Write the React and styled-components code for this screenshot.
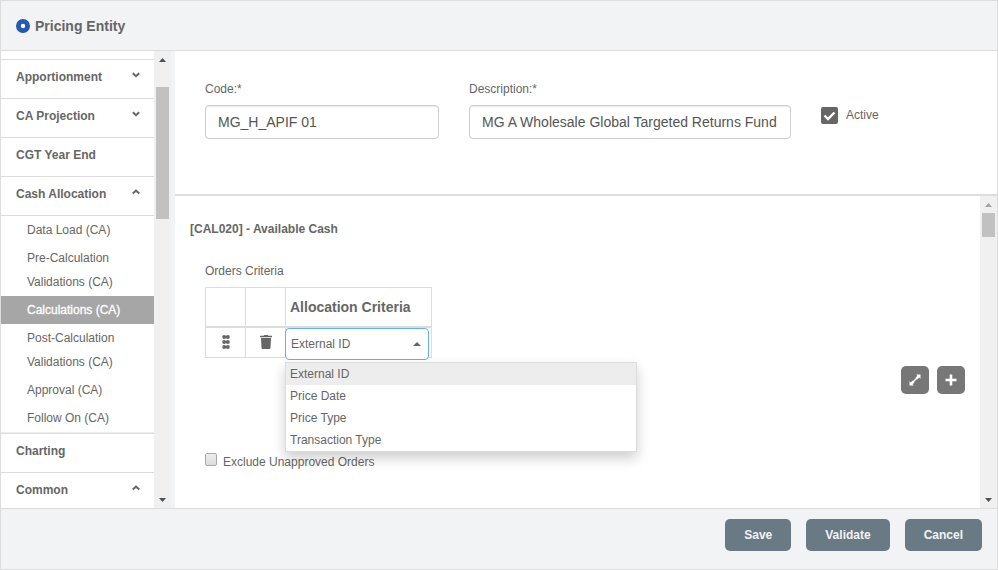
import React, { useState } from "react";
import styled, { createGlobalStyle } from "styled-components";

const GlobalStyle = createGlobalStyle`
  *, *::before, *::after { box-sizing: border-box; }
  html, body { margin: 0; padding: 0; }
  body, button, input, select {
    font-family: "Liberation Sans", Arial, Helvetica, sans-serif;
    font-size: 12px;
    color: #666;
  }
`;

const line = "#ddd";
const chrome = "#f2f3f5";

const Shell = styled.div`
  display: flex;
  flex-direction: column;
  height: 100vh;
  border: 1px solid ${line};
  background: ${chrome};
`;

const Header = styled.header`
  flex: none;
  display: flex;
  align-items: center;
  gap: 5px;
  height: 50px;
  padding: 0 15px;
  border-bottom: 1px solid ${line};
`;

const Title = styled.h1`
  margin: 0;
  font-size: 14px;
  line-height: 20px;
`;

const Body = styled.div`
  flex: 1;
  min-height: 0;
  display: flex;
`;

const Sidebar = styled.div`
  flex: none;
  display: flex;
  width: 170px;
  margin-right: 4px;
`;

const Nav = styled.nav`
  flex: 1;
  min-width: 0;
  overflow: hidden;
  padding-top: 8px;
  background: #fff;
`;

const NavGroup = styled.button`
  display: flex;
  justify-content: space-between;
  align-items: flex-start;
  width: 100%;
  height: 39px;
  padding: 9px 13px 0 15px;
  border: 0;
  border-top: 1px solid ${line};
  background: #fff;
  font-weight: bold;
  line-height: 16px;
  text-align: left;
  cursor: pointer;

  svg { margin-top: 2px; }
`;

const SubList = styled.ul`
  margin: 0;
  padding: 0;
  list-style: none;
  border-top: 1px solid ${line};
  border-bottom: 1px solid #eee;
`;

const SubLink = styled.a`
  display: block;
  padding: 2px 30px 2px 26px;
  line-height: 24px;
  text-decoration: none;
  color: ${(p) => (p.$active ? "#fff" : "#666")};
  background: ${(p) => (p.$active ? "#a6a6a6" : "transparent")};
  -webkit-text-stroke: ${(p) => (p.$active ? "0.3px #fff" : "0")};
`;

const Track = styled.div`
  flex: none;
  display: flex;
  flex-direction: column;
  align-items: center;
  width: 17px;
  background: #f0f0f0;
`;

const Arrow = styled.span`
  flex: none;
  display: flex;
  align-items: center;
  justify-content: center;
  width: 17px;
  height: 17px;
  color: ${(p) => (p.$muted ? "#a3a3a3" : "#505050")};
`;

const ThumbArea = styled.div`
  flex: 1;
  min-height: 0;
  padding-top: ${(p) => p.$top}px;
`;

const Thumb = styled.div`
  width: 13px;
  height: ${(p) => p.$size}px;
  background: #c1c1c1;
`;

const Main = styled.main`
  flex: 1;
  min-width: 0;
  display: flex;
  flex-direction: column;
`;

const FormGrid = styled.section`
  flex: none;
  display: grid;
  grid-template-columns: 3fr 4fr 2fr;
  padding: 30px 15px 55px;
  background: #fff;
  border-bottom: 2px solid ${line};
`;

const Field = styled.div`
  display: flex;
  flex-direction: column;
  gap: 8px;
  min-width: 0;
  padding: 0 15px;
`;

const Label = styled.label`
  line-height: 16px;
`;

const TextInput = styled.input`
  width: 100%;
  height: 34px;
  padding: 0 12px;
  border: 1px solid #ccc;
  border-radius: 4px;
  box-shadow: inset 0 1px 1px rgba(0, 0, 0, 0.075);
  background: #fff;
  color: #555;
  font-size: 14px;
`;

const ActiveField = styled.label`
  display: flex;
  align-items: flex-start;
  gap: 8px;
  padding: 26px 15px 0;
  line-height: 16px;
`;

const TickBox = styled.span`
  display: grid;

  input, svg { grid-area: 1 / 1; }
  svg { pointer-events: none; visibility: hidden; }
  input:checked + svg { visibility: visible; }
`;

const TickInput = styled.input`
  appearance: none;
  width: 17px;
  height: 17px;
  margin: 0;
  border: 2px solid #666;
  border-radius: 2px;

  &:checked { background: #666; }
`;

const Pane = styled.div`
  flex: 1;
  min-height: 0;
  display: flex;
  background: #fff;
`;

const PaneContent = styled.section`
  flex: 1;
  min-width: 0;
  overflow: hidden;
  padding: 25px 15px 0;
`;

const SectionTitle = styled.h2`
  margin: 0 0 26px;
  font-size: 12px;
  line-height: 16px;
`;

const Criteria = styled.div`
  padding-left: 15px;
`;

const CriteriaTable = styled.table`
  margin-top: 8px;
  border-collapse: collapse;
  table-layout: fixed;
  width: 227px;

  caption { padding-bottom: 8px; line-height: 16px; text-align: left; }
`;

const HeadCell = styled.th`
  width: ${(p) => (p.$narrow ? "40px" : "auto")};
  height: 39px;
  padding: 0 4px;
  border: 1px solid ${line};
  border-bottom-width: 2px;
  font-size: 14px;
  text-align: left;
`;

const Cell = styled.td`
  height: 30px;
  padding: 0;
  border: 1px solid ${line};
  text-align: center;
  vertical-align: middle;
`;

const CellButton = styled.button`
  display: inline-flex;
  padding: 0;
  border: 0;
  background: none;
  vertical-align: middle;
  cursor: pointer;
`;

const Combo = styled.div`
  position: relative;
  display: grid;
  align-items: center;
  width: 144px;
  height: 32px;
  margin: 0 0 -3px -1px;
  text-align: left;

  > select, > svg { grid-area: 1 / 1; }
  > svg { justify-self: end; margin-right: 8px; pointer-events: none; }
`;

const Select = styled.select`
  appearance: none;
  width: 100%;
  height: 32px;
  padding: 0 24px 0 5px;
  border: 1px solid #66afe9;
  border-radius: 4px;
  background: #fff;
  outline: none;
`;

const Menu = styled.ul`
  position: absolute;
  z-index: 2;
  top: 34px;
  left: 0;
  width: 352px;
  margin: 0;
  padding: 0;
  list-style: none;
  border: 1px solid ${line};
  background: #fff;
  box-shadow: 0 6px 12px rgba(0, 0, 0, 0.2);
`;

const Option = styled.li`
  padding: 0 4px;
  line-height: 22px;
  background: ${(p) => (p.$selected ? "#ededed" : "transparent")};
  cursor: pointer;
`;

const Actions = styled.div`
  display: flex;
  justify-content: flex-end;
  gap: 8px;
  margin: 8px 0 59px;
`;

const IconButton = styled.button`
  display: flex;
  align-items: center;
  justify-content: center;
  width: 28px;
  height: 28px;
  padding: 0;
  border: 0;
  border-radius: 5px;
  background: #777;
  color: #fff;
`;

const CheckRow = styled.label`
  display: flex;
  align-items: flex-start;
  gap: 6px;
  line-height: 18px;
`;

const PlainCheck = styled.input`
  appearance: none;
  width: 12px;
  height: 13px;
  margin: 0;
  border: 1px solid #a8a8a8;
  border-radius: 2px;
  background: linear-gradient(#eee, #dcdcdc);

  &:checked { background: #666; }
`;

const Footer = styled.footer`
  flex: none;
  display: flex;
  justify-content: flex-end;
  gap: 15px;
  padding: 10px 15px 18px;
  border-top: 1px solid ${line};
`;

const FooterButton = styled.button`
  height: 32px;
  padding: 0 19px;
  border: 0;
  border-radius: 5px;
  background: #6a7a84;
  color: ${chrome};
  font-weight: bold;
  cursor: pointer;
`;

function Chevron({ up }) {
  return (
    <svg width="10" height="8" viewBox="0 0 10 8" aria-hidden="true">
      <path d={up ? "M1.8 5.6 5 2.6 8.2 5.6" : "M1.8 2.2 5 5.2 8.2 2.2"} fill="none" stroke="#666" strokeWidth="2" />
    </svg>
  );
}

function Scrollbar({ top, size, atTop }) {
  return (
    <Track aria-hidden="true">
      <Arrow $muted={atTop}>
        <svg width="7" height="4" viewBox="0 0 7 4"><path d="M0 4 3.5 0 7 4Z" fill="currentColor" /></svg>
      </Arrow>
      <ThumbArea $top={top}><Thumb $size={size} /></ThumbArea>
      <Arrow>
        <svg width="7" height="4" viewBox="0 0 7 4"><path d="M0 0H7L3.5 4Z" fill="currentColor" /></svg>
      </Arrow>
    </Track>
  );
}

const groups = [
  { name: "Apportionment", state: "closed" },
  { name: "CA Projection", state: "closed" },
  { name: "CGT Year End" },
  {
    name: "Cash Allocation",
    state: "open",
    items: [
      "Data Load (CA)",
      "Pre-Calculation Validations (CA)",
      "Calculations (CA)",
      "Post-Calculation Validations (CA)",
      "Approval (CA)",
      "Follow On (CA)",
    ],
  },
  { name: "Charting" },
  { name: "Common", state: "open" },
];

const criteria = ["External ID", "Price Date", "Price Type", "Transaction Type"];

export default function App() {
  const [criterion, setCriterion] = useState("External ID");

  return (
    <Shell>
      <GlobalStyle />
      <Header>
        <svg width="14" height="14" viewBox="0 0 14 14" aria-hidden="true">
          <circle cx="7" cy="7" r="4.6" fill="#fff" stroke="#2458b3" strokeWidth="4.8" />
        </svg>
        <Title>Pricing Entity</Title>
      </Header>

      <Body>
        <Sidebar>
          <Nav aria-label="Sections">
            {groups.map((g) => (
              <React.Fragment key={g.name}>
                <NavGroup type="button">
                  {g.name}
                  {g.state && <Chevron up={g.state === "open"} />}
                </NavGroup>
                {g.items && (
                  <SubList>
                    {g.items.map((item) => (
                      <li key={item}>
                        <SubLink href="#" $active={item === "Calculations (CA)"}>{item}</SubLink>
                      </li>
                    ))}
                  </SubList>
                )}
              </React.Fragment>
            ))}
          </Nav>
          <Scrollbar top={19} size={132} />
        </Sidebar>

        <Main>
          <FormGrid>
            <Field>
              <Label htmlFor="code">Code:*</Label>
              <TextInput id="code" defaultValue="MG_H_APIF 01" />
            </Field>
            <Field>
              <Label htmlFor="description">Description:*</Label>
              <TextInput id="description" defaultValue="MG A Wholesale Global Targeted Returns Fund" />
            </Field>
            <ActiveField>
              <TickBox>
                <TickInput type="checkbox" defaultChecked />
                <svg width="17" height="17" viewBox="0 0 17 17" aria-hidden="true">
                  <path d="M3.5 8.5 7 12 13.5 5.5" fill="none" stroke="#fff" strokeWidth="2.4" />
                </svg>
              </TickBox>
              Active
            </ActiveField>
          </FormGrid>

          <Pane>
            <PaneContent>
              <SectionTitle>[CAL020] - Available Cash</SectionTitle>
              <Criteria>
                <CriteriaTable>
                  <caption>Orders Criteria</caption>
                  <thead>
                    <tr>
                      <HeadCell $narrow />
                      <HeadCell $narrow />
                      <HeadCell>Allocation Criteria</HeadCell>
                    </tr>
                  </thead>
                  <tbody>
                    <tr>
                      <Cell>
                        <CellButton type="button" aria-label="Reorder">
                          <svg width="8" height="14" viewBox="0 0 8 14" fill="#666">
                            {[2, 7, 12].map((y) => (
                              <React.Fragment key={y}>
                                <circle cx="2.2" cy={y} r="2" />
                                <circle cx="5.8" cy={y} r="2" />
                              </React.Fragment>
                            ))}
                          </svg>
                        </CellButton>
                      </Cell>
                      <Cell>
                        <CellButton type="button" aria-label="Delete">
                          <svg width="12" height="14" viewBox="0 0 12 14" fill="#666">
                            <path d="M0 .8H3.5L4.3 0H7.7L8.5 .8H12V2.2H0ZM1 3H11L10.5 12.8Q10.4 14 9.2 14H2.8Q1.6 14 1.5 12.8Z" />
                          </svg>
                        </CellButton>
                      </Cell>
                      <Cell>
                        <Combo>
                          <Select aria-label="Allocation Criteria" value={criterion} onChange={(e) => setCriterion(e.target.value)}>
                            {criteria.map((c) => <option key={c}>{c}</option>)}
                          </Select>
                          <svg width="8" height="4" viewBox="0 0 8 4" aria-hidden="true"><path d="M0 4 4 0 8 4Z" fill="#666" /></svg>
                          <Menu role="listbox" aria-label="Allocation Criteria options">
                            {criteria.map((c) => (
                              <Option key={c} role="option" aria-selected={c === criterion} $selected={c === criterion} onClick={() => setCriterion(c)}>
                                {c}
                              </Option>
                            ))}
                          </Menu>
                        </Combo>
                      </Cell>
                    </tr>
                  </tbody>
                </CriteriaTable>
                <Actions>
                  <IconButton type="button" aria-label="Expand">
                    <svg width="12" height="12" viewBox="0 0 12 12" fill="#fff">
                      <path d="M7.2 .5H11.5V4.8L10.2 3.6 8.2 5.5 6.5 3.8 8.4 1.8ZM4.8 11.5H.5V7.2L1.8 8.4 3.8 6.5 5.5 8.2 3.6 10.2Z" />
                      <path d="M4 8 8 4" stroke="#fff" strokeWidth="1.5" />
                    </svg>
                  </IconButton>
                  <IconButton type="button" aria-label="Add">
                    <svg width="12" height="12" viewBox="0 0 12 12"><path d="M6 .5V11.5M.5 6H11.5" stroke="#fff" strokeWidth="2.6" /></svg>
                  </IconButton>
                </Actions>
                <CheckRow>
                  <PlainCheck type="checkbox" />
                  Exclude Unapproved Orders
                </CheckRow>
              </Criteria>
            </PaneContent>
            <Scrollbar top={0} size={24} atTop />
          </Pane>
        </Main>
      </Body>

      <Footer>
        <FooterButton type="button">Save</FooterButton>
        <FooterButton type="button">Validate</FooterButton>
        <FooterButton type="button">Cancel</FooterButton>
      </Footer>
    </Shell>
  );
}
